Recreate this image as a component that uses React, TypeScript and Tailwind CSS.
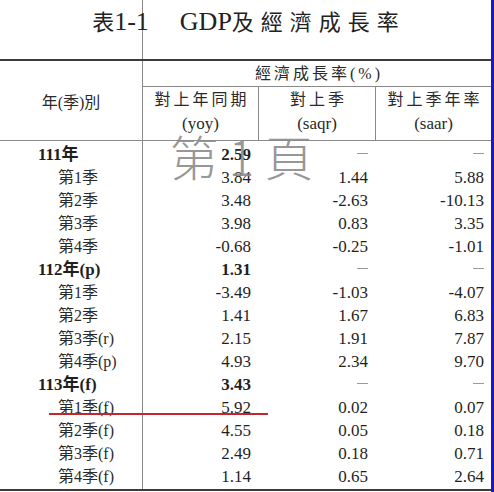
import React from "react";

interface Row {
  label: string;
  year?: boolean;
  yoy: string;
  saqr: string | null;
  saar: string | null;
}

const rows: Row[] = [
  { label: "111年", year: true, yoy: "2.59", saqr: null, saar: null },
  { label: "第1季", yoy: "3.84", saqr: "1.44", saar: "5.88" },
  { label: "第2季", yoy: "3.48", saqr: "-2.63", saar: "-10.13" },
  { label: "第3季", yoy: "3.98", saqr: "0.83", saar: "3.35" },
  { label: "第4季", yoy: "-0.68", saqr: "-0.25", saar: "-1.01" },
  { label: "112年(p)", year: true, yoy: "1.31", saqr: null, saar: null },
  { label: "第1季", yoy: "-3.49", saqr: "-1.03", saar: "-4.07" },
  { label: "第2季", yoy: "1.41", saqr: "1.67", saar: "6.83" },
  { label: "第3季(r)", yoy: "2.15", saqr: "1.91", saar: "7.87" },
  { label: "第4季(p)", yoy: "4.93", saqr: "2.34", saar: "9.70" },
  { label: "113年(f)", year: true, yoy: "3.43", saqr: null, saar: null },
  { label: "第1季(f)", yoy: "5.92", saqr: "0.02", saar: "0.07" },
  { label: "第2季(f)", yoy: "4.55", saqr: "0.05", saar: "0.18" },
  { label: "第3季(f)", yoy: "2.49", saqr: "0.18", saar: "0.71" },
  { label: "第4季(f)", yoy: "1.14", saqr: "0.65", saar: "2.64" },
];

const font = {
  fontFamily: '"Liberation Serif", "Noto Sans CJK TC", serif',
};

function Dash() {
  return <span className="inline-block w-[11px] h-px bg-[#9a9a9a] mb-[6px]" />;
}

export default function App() {
  return (
    <div
      className="relative w-[494px] h-[492px] bg-white flex text-[#1f1f1f]"
      style={font}
    >
      <div className="w-[491px] flex flex-col">
        {/* Title */}
        <div className="relative flex h-[59px]">
          <div className="w-[143px] border-r border-[#8a8a8a]" />
          <div className="flex-1" />
          <div className="absolute left-0 right-0 top-[6px] flex justify-center items-baseline text-[26px] leading-[32px] text-[#222]">
            <span className="text-[22px]">表</span>
            <span>1-1</span>
            <span className="ml-[31px]">GDP</span>
            <span className="text-[22px] tracking-[7px] -mr-[7px]">及經濟成長率</span>
          </div>
        </div>
        <div className="h-[2px] bg-[#3c3c3c]" />

        {/* Header */}
        <div className="flex h-[79px] text-[#2a2a2a]">
          <div className="w-[143px] border-r border-[#8a8a8a] flex items-center justify-center pt-[4px] text-[16px]">
            年(季)別
          </div>
          <div className="flex-1 flex flex-col">
            <div className="h-[26px] border-b border-[#8a8a8a] flex items-center justify-center pl-[4px] text-[16px] tracking-[3px]">
              經濟成長率(%)
            </div>
            <div className="flex-1 flex text-center text-[16px] leading-[24px]">
              <div className="w-[116px] border-r border-[#8a8a8a] pt-[1px]">
                <div className="tracking-[3px] pl-[3px]">對上年同期</div>
                <div className="text-[17px]">(yoy)</div>
              </div>
              <div className="w-[117px] border-r border-[#8a8a8a] pt-[1px]">
                <div className="tracking-[3px] pl-[3px]">對上季</div>
                <div className="text-[17px]">(saqr)</div>
              </div>
              <div className="flex-1 pt-[1px]">
                <div className="tracking-[3px] pl-[3px]">對上季年率</div>
                <div className="text-[17px]">(saar)</div>
              </div>
            </div>
          </div>
        </div>
        <div className="h-px bg-[#8a8a8a]" />

        {/* Body */}
        <div className="flex-1 flex">
          <div className="w-[143px] border-r border-[#8a8a8a] pt-[2px]">
            {rows.map((r, i) => (
              <div
                key={i}
                className={`h-[23px] flex items-center ${
                  r.year
                    ? "pl-[38px] font-bold text-[17px]"
                    : "pl-[58px] text-[16px] text-[#2a2a2a]"
                }`}
              >
                {r.label}
              </div>
            ))}
          </div>
          <div className="flex-1 pt-[2px] text-[17px]">
            {rows.map((r, i) => (
              <div key={i} className="h-[23px] flex items-center">
                <div
                  className={`w-[116px] text-right pr-[8px] ${
                    r.year ? "font-bold" : ""
                  }`}
                >
                  {r.yoy}
                </div>
                <div className="w-[117px] text-right pr-[8px]">
                  {r.saqr ?? <Dash />}
                </div>
                <div className="flex-1 text-right pr-[7px]">
                  {r.saar ?? <Dash />}
                </div>
              </div>
            ))}
          </div>
        </div>
        <div className="h-[2px] bg-[#3c3c3c]" />
        <div className="h-px" />
      </div>
      <div className="w-[3px] bg-[#1818c4]" />

      {/* Page watermark */}
      <div
        className="absolute left-[170px] top-[131px] text-[48px] leading-[48px] font-light text-[#8c8c8c] opacity-90 whitespace-pre"
        style={{ fontFamily: '"Noto Sans CJK TC", sans-serif' }}
      >
        第 1 頁
      </div>

      {/* red mark */}
      <div className="absolute left-[49px] top-[413px] w-[219px] h-[2px] bg-[#c4262e]" />
    </div>
  );
}
